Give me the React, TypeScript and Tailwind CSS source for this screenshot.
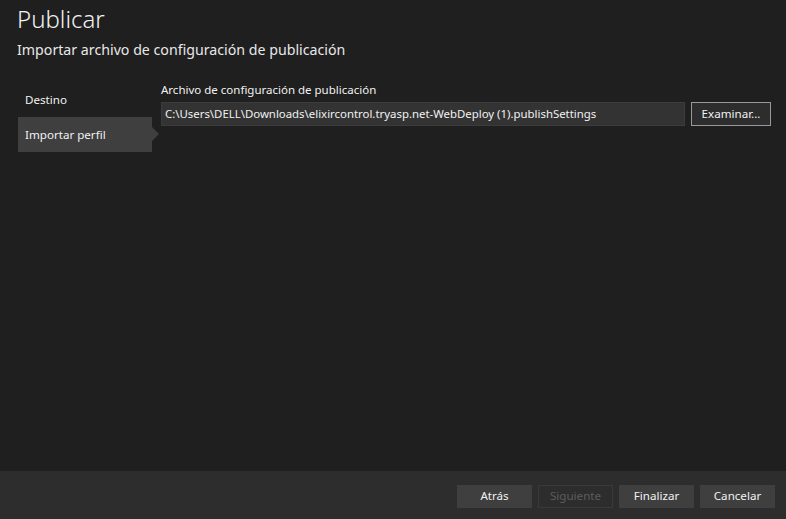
import React from 'react';

const App: React.FC = () => {
  const steps = [
    { label: 'Destino', active: false },
    { label: 'Importar perfil', active: true },
  ];

  return (
    <div className="w-[786px] h-[519px] bg-[#1f1f1f] text-[#f1f1f1] flex flex-col overflow-hidden font-['Noto_Sans',sans-serif]">
      <div className="flex-1 flex flex-col">
        <div className="px-[17px] pt-[1px]">
          <h1 className="text-[24px] font-light leading-[36px] text-[#f1f1f1]">Publicar</h1>
          <p className="text-[14.2px] leading-[22px] mt-[2px] text-[#e8e8e8]">Importar archivo de configuración de publicación</p>
        </div>

        <div className="flex mt-[21px]">
          <nav className="w-[134px] ml-[18px] flex flex-col">
            {steps.map((s) => (
              <div
                key={s.label}
                className={`relative h-[35px] flex items-center pl-[7px] text-[11.6px] ${
                  s.active ? 'bg-[#3f3f3f]' : ''
                }`}
              >
                {s.label}
                {s.active && (
                  <span className="absolute right-[-7px] top-[10px] w-0 h-0 border-y-[7px] border-y-transparent border-l-[7px] border-l-[#3f3f3f]" />
                )}
              </div>
            ))}
          </nav>

          <div className="ml-[9px] flex-1 pr-[15px]">
            <div className="text-[11.5px] leading-[16px] text-[#f1f1f1]">Archivo de configuración de publicación</div>
            <div className="flex gap-[6px] mt-[4px]">
              <div className="w-[524px] h-[24px] bg-[#333333] border border-[#3c3c3c] flex items-center px-[3px] text-[11.4px] text-[#f1f1f1] whitespace-nowrap">
                C:\Users\DELL\Downloads\elixircontrol.tryasp.net-WebDeploy (1).publishSettings
              </div>
              <button className="w-[80px] h-[24px] bg-[#2d2d2d] border border-[#999999] text-[11.6px] text-[#f1f1f1]">
                Examinar...
              </button>
            </div>
          </div>
        </div>
      </div>

      <div className="h-[48px] bg-[#2d2d2d] flex items-center justify-end gap-[6px] pr-[11px] pt-[2px]">
        <button className="w-[75px] h-[23px] bg-[#3f3f3f] text-[11.6px] text-[#f1f1f1]">Atrás</button>
        <button className="w-[75px] h-[23px] bg-[#2d2d2d] border border-[#3a3a3a] text-[11.6px] text-[#5c5c5c]">Siguiente</button>
        <button className="w-[75px] h-[23px] bg-[#3f3f3f] text-[11.6px] text-[#f1f1f1]">Finalizar</button>
        <button className="w-[75px] h-[23px] bg-[#3f3f3f] text-[11.6px] text-[#f1f1f1]">Cancelar</button>
      </div>
    </div>
  );
};

export default App;
